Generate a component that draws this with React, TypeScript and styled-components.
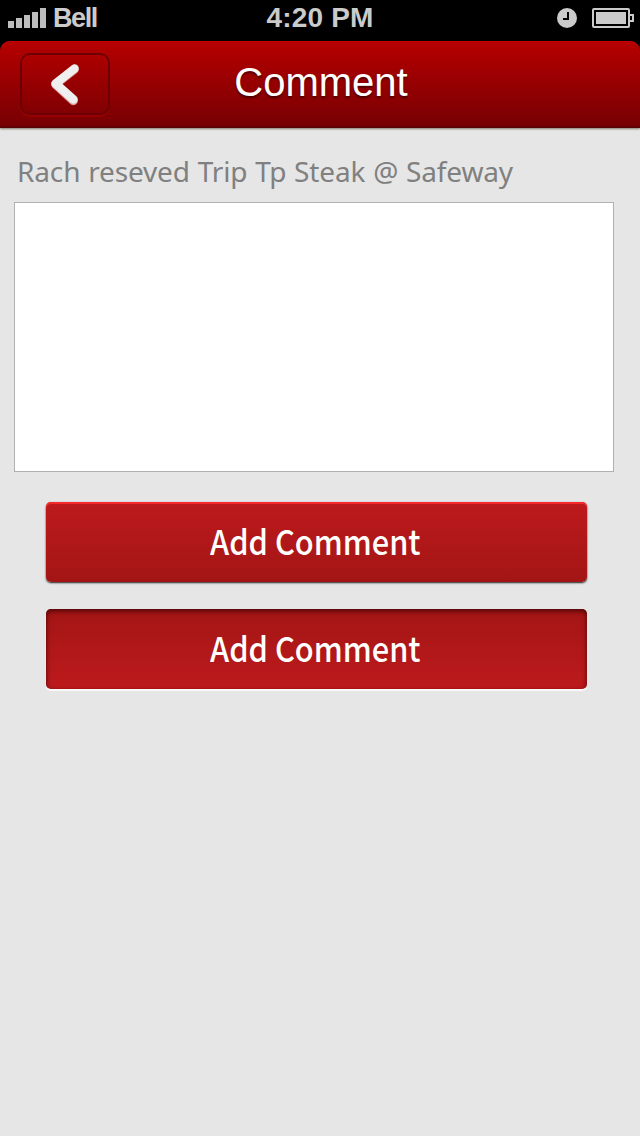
import React from 'react';
import styled, { createGlobalStyle, css } from 'styled-components';

const GlobalStyle = createGlobalStyle`
  * { box-sizing: border-box; }
  body { margin: 0; background: #e6e6e6; }
`;

const Screen = styled.div`
  width: 640px;
  height: 1136px;
  display: flex;
  flex-direction: column;
  background: #e6e6e6;
  overflow: hidden;
`;

const Top = styled.div`
  background: #000;
  height: 128px;
  flex: none;
  box-shadow: 0 1px 2px rgba(70, 50, 30, 0.6);
`;

const StatusBar = styled.div`
  height: 41px;
  padding: 0 6px 0 8px;
  display: grid;
  grid-template-columns: 1fr auto 1fr;
  align-items: start;
  color: #cbcbcb;
  font: bold 28px/36px 'Liberation Sans', Arial, sans-serif;
`;

const Carrier = styled.div`
  display: flex;
  gap: 7px;
  font-size: 27px;
  letter-spacing: -1.4px;
  svg { margin-top: 8px; }
`;

const Clock = styled.div`
  letter-spacing: 0.15px;
  padding-right: 2px;
`;

const Indicators = styled.div`
  display: flex;
  justify-content: flex-end;
  gap: 14px;
  padding-top: 8px;
`;

const Header = styled.header`
  height: 87px;
  border-radius: 10px 10px 0 0;
  display: grid;
  grid-template-columns: 90px 1fr 90px;
  padding: 12px 20px 0;
  background: linear-gradient(#b60000, #760003);
  box-shadow: inset 0 1px 0 #c40000, inset 0 -2px 0 #5b0305;
`;

const BackButton = styled.button`
  width: 90px;
  height: 62px;
  padding: 0;
  border: 2px solid #6c0002;
  border-radius: 10px;
  background: transparent;
  box-shadow: inset 0 1px 0 #b00002, 0 2px 1px #a80003a0;
  svg { display: block; }
`;

const Title = styled.h1`
  margin: 0;
  padding-left: 2px;
  text-align: center;
  color: #fff;
  font: 400 40px/58px 'Liberation Sans', Arial, sans-serif;
  text-shadow: 0 2px 2px rgba(50, 0, 0, 0.7);
`;

const Form = styled.main`
  display: flex;
  flex-direction: column;
  padding: 24px 26px 0 14px;
`;

const Label = styled.label`
  height: 50px;
  padding: 0 0 0 3px;
  color: #808080;
  white-space: nowrap;
  font: 400 28px/38px 'Noto Sans', 'Open Sans', sans-serif;
  letter-spacing: -0.14px;
  word-spacing: 0.7px;
`;

const CommentBox = styled.textarea`
  display: block;
  width: 600px;
  height: 270px;
  padding: 12px;
  border: 1px solid #b0b0b0;
  border-radius: 0;
  outline: 0;
  resize: none;
  background: #fff;
  font: 28px 'Noto Sans', sans-serif;
`;

const Actions = styled.div`
  display: flex;
  flex-direction: column;
  gap: 27px;
  padding: 30px 0 0 32px;
`;

const ActionButton = styled.button<{ $pressed?: boolean }>`
  width: 541px;
  height: 80px;
  padding: 0 2px 2px 0;
  border: 0;
  border-radius: 5px;
  color: #fff;
  font: 500 34px/78px 'Noto Sans CJK SC', sans-serif;
  ${({ $pressed }) =>
    $pressed
      ? css`
          background: linear-gradient(#a31515, #bd1a1c);
          box-shadow: inset 0 2px 5px #4a0505, 0 2px 1px #fafafa;
        `
      : css`
          background: linear-gradient(#bd1a1c, #a31515);
          box-shadow: inset 0 2px 0 #f5282b, 0 1px 2px rgba(0, 0, 0, 0.85);
        `}
`;

const Caption = styled.span`
  display: inline-block;
  transform: scaleX(0.905);
`;

export default function App() {
  return (
    <Screen>
      <GlobalStyle />
      <Top>
        <StatusBar>
          <Carrier>
            <svg width="38" height="20" fill="#bdbdbd">
              <path d="M0 13h6v7H0zM8 10h6v10H8zM16 7h6v13h-6zM24 4h6v16h-6zM32 0h6v20h-6z" />
            </svg>
            Bell
          </Carrier>
          <Clock>4:20 PM</Clock>
          <Indicators>
            <svg width="21" height="20">
              <circle cx="10" cy="10" r="10" fill="#cbcbcb" />
              <path d="M11 4v7H6" fill="none" stroke="#000" strokeWidth="2" />
            </svg>
            <svg width="42" height="20" fill="none" stroke="#cbcbcb" strokeWidth="2">
              <rect x="1" y="1" width="36" height="18" rx="1" />
              <path d="M38 7h3v6h-3" />
              <path d="M4 4h30v12H4z" fill="#cbcbcb" stroke="none" />
            </svg>
          </Indicators>
        </StatusBar>
        <Header>
          <BackButton aria-label="Back">
            <svg width="86" height="58" fill="none" strokeWidth="8.500" strokeLinecap="round" strokeLinejoin="round">
              <path d="M52.500 14.500L33.500 29.500L51.500 46" stroke="#e09a9c" />
              <path d="M52.500 13.500L33.500 28.500L51.500 44.500" stroke="#efefef" />
            </svg>
          </BackButton>
          <Title>Comment</Title>
        </Header>
      </Top>
      <Form>
        <Label htmlFor="comment">Rach reseved Trip Tp Steak @ Safeway</Label>
        <CommentBox id="comment" />
        <Actions>
          <ActionButton><Caption>Add Comment</Caption></ActionButton>
          <ActionButton $pressed><Caption>Add Comment</Caption></ActionButton>
        </Actions>
      </Form>
    </Screen>
  );
}
